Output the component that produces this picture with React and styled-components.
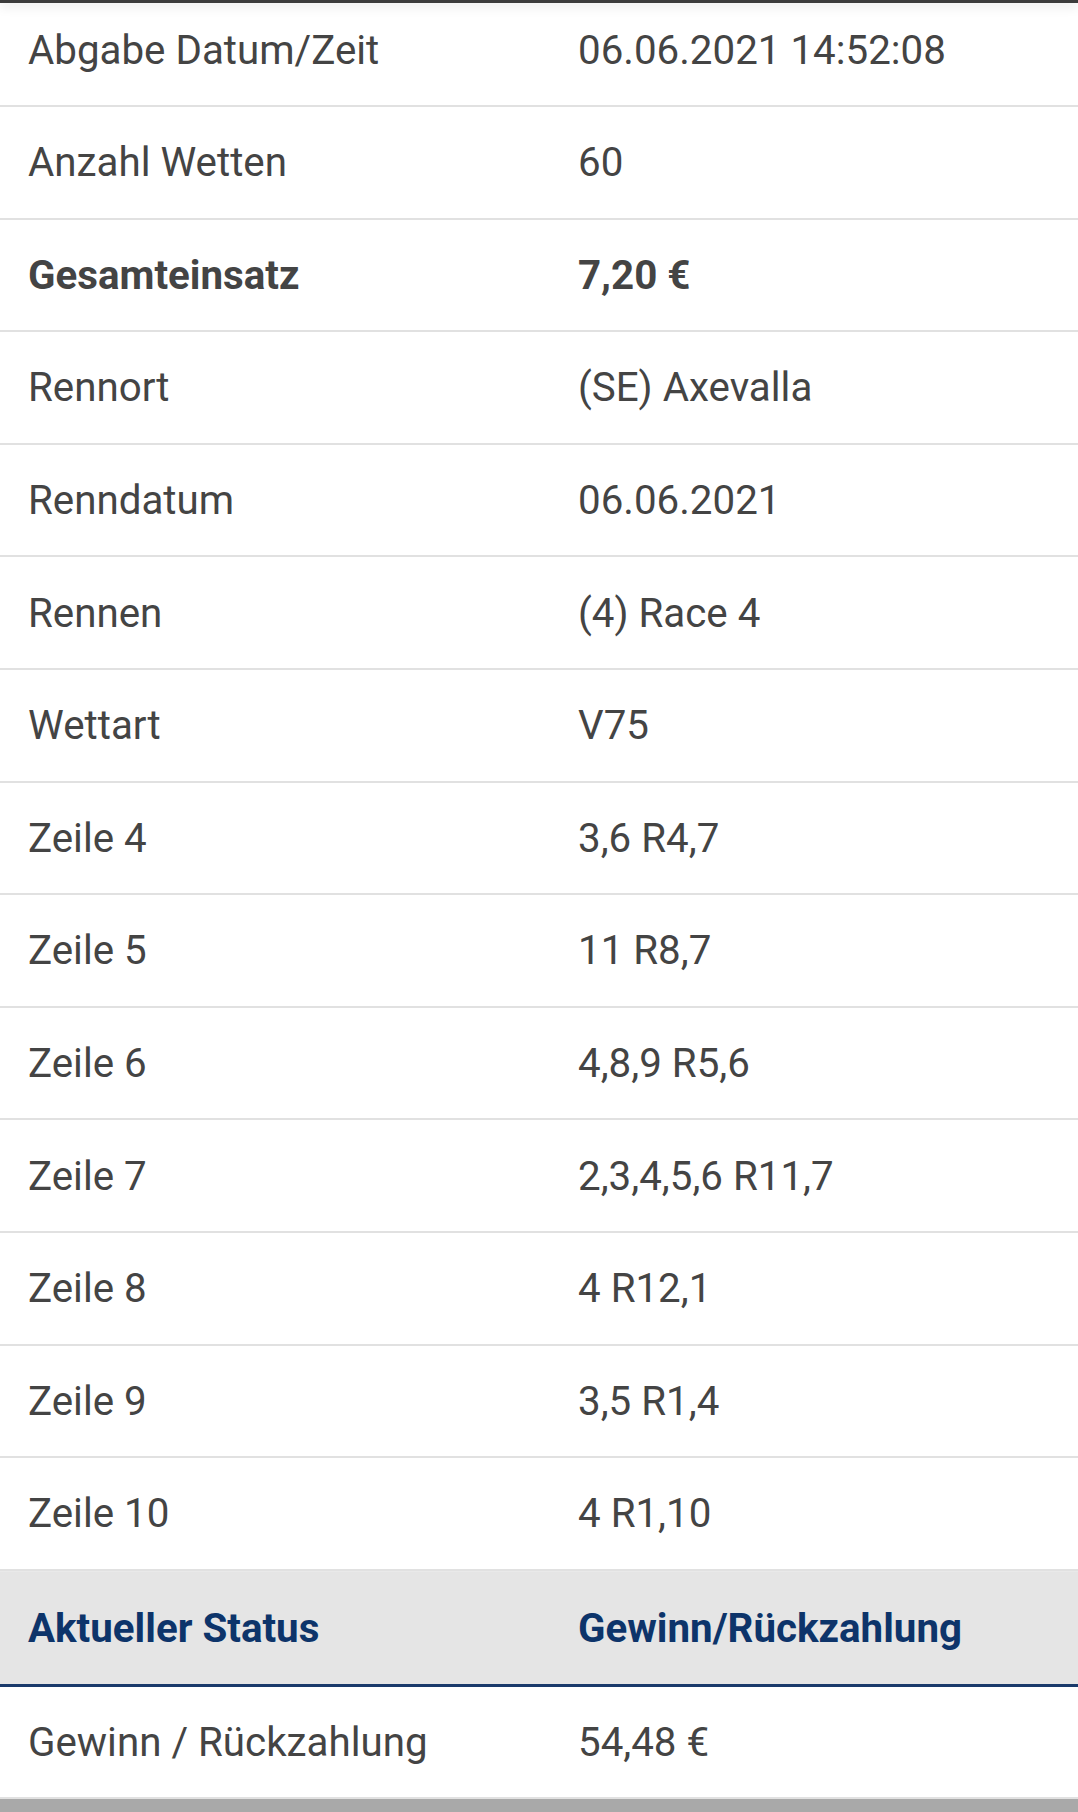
import React from "react";
import styled, { createGlobalStyle } from "styled-components";

const GlobalStyle = createGlobalStyle`
  html, body {
    margin: 0;
    padding: 0;
    background: #fff;
    overflow: hidden;
  }
  body {
    font-family: Roboto, "Liberation Sans", Arial, sans-serif;
    color: #444;
  }
`;

const rows = [
  { label: "Abgabe Datum/Zeit", value: "06.06.2021 14:52:08" },
  { label: "Anzahl Wetten", value: "60" },
  { label: "Gesamteinsatz", value: "7,20 €", bold: true },
  { label: "Rennort", value: "(SE) Axevalla" },
  { label: "Renndatum", value: "06.06.2021" },
  { label: "Rennen", value: "(4) Race 4" },
  { label: "Wettart", value: "V75" },
  { label: "Zeile 4", value: "3,6 R4,7" },
  { label: "Zeile 5", value: "11 R8,7" },
  { label: "Zeile 6", value: "4,8,9 R5,6" },
  { label: "Zeile 7", value: "2,3,4,5,6 R11,7" },
  { label: "Zeile 8", value: "4 R12,1" },
  { label: "Zeile 9", value: "3,5 R1,4" },
  { label: "Zeile 10", value: "4 R1,10" },
];

const App = () => {
  return (
    <Page>
      <GlobalStyle />
      <TopEdge />

      <Table>
        {rows.map((row) => (
          <Row key={row.label}>
            <Cell $bold={row.bold}>{row.label}</Cell>
            <Cell $bold={row.bold}>{row.value}</Cell>
          </Row>
        ))}

        <HeadRow>
          <HeadCell>Aktueller Status</HeadCell>
          <HeadCell>Gewinn/Rückzahlung</HeadCell>
        </HeadRow>

        <Row $last>
          <Cell>Gewinn / Rückzahlung</Cell>
          <Cell>54,48 €</Cell>
        </Row>
      </Table>

      <Footer />
    </Page>
  );
};

export default App;

const Page = styled.div`
  position: relative;
  width: 1078px;
  height: 1812px;
  overflow: hidden;
  background: #fff;
`;

const TopEdge = styled.div`
  position: absolute;
  top: 0;
  left: 0;
  right: 0;
  height: 3px;
  background: #3b3b3b;
  box-shadow: 0 2px 12px rgba(0, 0, 0, 0.22);
  z-index: 2;
`;

const Table = styled.div`
  display: flex;
  flex-direction: column;
  margin-top: -5.6px;
`;

const Row = styled.div`
  display: grid;
  grid-template-columns: 550px 1fr;
  align-items: center;
  box-sizing: border-box;
  flex-shrink: 0;
  height: ${(p) => (p.$last ? "112px" : "112.6px")};
  border-bottom: 2px solid #e1e1e1;
`;

const Cell = styled.div`
  padding: 2px 0 0 28px;
  font-size: 40.3px;
  line-height: 48px;
  font-weight: ${(p) => (p.$bold ? 700 : 400)};
  color: #444;
  white-space: nowrap;
`;

const HeadRow = styled.div`
  display: grid;
  grid-template-columns: 550px 1fr;
  align-items: center;
  box-sizing: border-box;
  flex-shrink: 0;
  height: 116px;
  background: #e5e5e5;
  border-top: 1px solid #e9e9e9;
  border-bottom: 3px solid #1a3a6b;
`;

const HeadCell = styled.div`
  padding: 2px 0 0 28px;
  font-size: 40.3px;
  line-height: 48px;
  font-weight: 700;
  color: #0d346a;
  white-space: nowrap;
`;

const Footer = styled.div`
  height: 20px;
  background: #a9a9a9;
`;
